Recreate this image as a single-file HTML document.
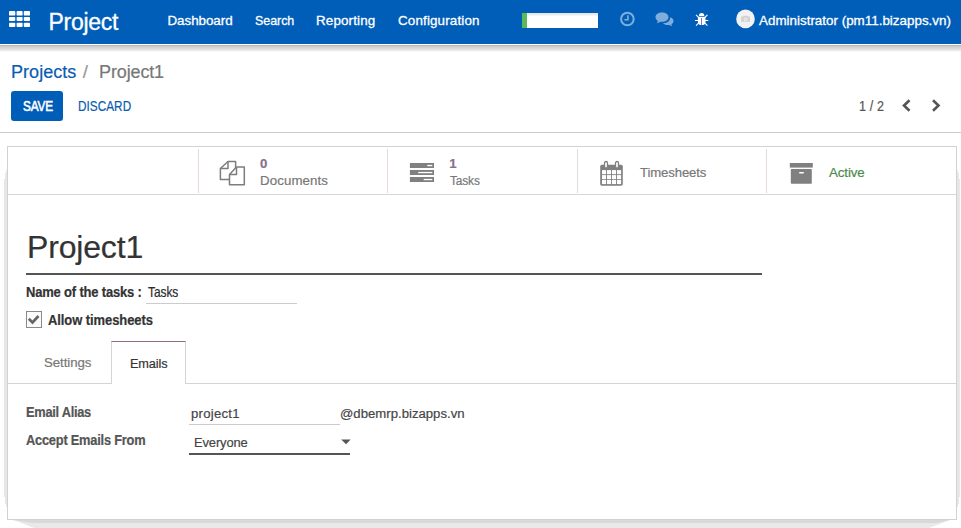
<!DOCTYPE html>
<html><head><meta charset="utf-8">
<style>
*{box-sizing:border-box;margin:0;padding:0}
html,body{width:961px;height:528px;overflow:hidden;background:#fff;font-family:"Liberation Sans",sans-serif;color:#333}
.a,.t{position:absolute;white-space:nowrap}
.t{line-height:normal;-webkit-text-stroke:.2px}
.w{-webkit-text-stroke:.3px #fff}
.w2{-webkit-text-stroke:.55px #fff}
#nav{left:0;top:0;width:961px;height:44px;background:#005eb8}
#navsh{left:0;top:45px;width:961px;height:7px;background:linear-gradient(#b0b0b0,#d0d0d0 25%,#dcdcdc 55%,#f0f0f0 85%,#fff)}
.vs{width:1px;top:149px;height:44px;background:#e4dada}
</style></head><body>
<div class="a" id="nav"></div><div class="a" id="navsh"></div>
<!-- apps grid -->
<svg class="a" style="left:9px;top:10px" width="22" height="18" viewBox="0 0 22 18"><g fill="#fff"><rect x="0" y="1" width="6.3" height="4.6" rx=".9"/><rect x="7.6" y="1" width="6" height="4.6" rx=".9"/><rect x="14.8" y="1" width="6.2" height="4.6" rx=".9"/><rect x="0" y="6.9" width="6.3" height="4.1" rx=".9"/><rect x="7.6" y="6.9" width="6" height="4.1" rx=".9"/><rect x="14.8" y="6.9" width="6.2" height="4.1" rx=".9"/><rect x="0" y="12.7" width="6.3" height="4.3" rx=".9"/><rect x="7.6" y="12.7" width="6" height="4.3" rx=".9"/><rect x="14.8" y="12.7" width="6.2" height="4.3" rx=".9"/></g></svg>
<!-- progress -->
<div class="a" style="left:522px;top:13px;width:76px;height:15px;background:linear-gradient(#e6e6e6,#ececec 2px,#fff 3px);border-left:5px solid #5cb85c"></div>
<!-- clock -->
<svg class="a" style="left:619px;top:11px" width="17" height="17" viewBox="0 0 17 17"><circle cx="8.4" cy="8" r="6.3" fill="none" stroke="#80aedb" stroke-width="2"/><path d="M8.9 4.2v4.6H5.4" fill="none" stroke="#80aedb" stroke-width="1.6"/></svg>
<!-- comments -->
<svg class="a" style="left:655px;top:12px" width="20" height="16" viewBox="0 0 20 16"><g fill="#80aedb"><path d="M7 .6c3.700 0 6.500 2 6.500 4.600s-2.800 4.600-6.500 4.600c-.6 0-1.200-.05-1.700-.15C4.300 10.500 3 11.100 1.600 11.300c.7-.7 1.200-1.400 1.300-2.300C1.400 8.100.5 6.700.5 5.200.5 2.600 3.300.6 7 .6z"/><path d="M15 6.300c0 .3 0 .6-.1.900-.7 2.400-3.500 4-6.900 4.100 1.100 1.200 3 1.900 5 1.800.5 0 .9 0 1.300-.1.900.7 2 1.200 3.200 1.300-.6-.6-1-1.300-1.100-2.100 1.300-.8 2.100-2 2.100-3.300 0-1.500-1.200-2.900-3-3.600-.1.300-.3.700-.5 1z"/></g></svg>
<!-- bug -->
<svg class="a" style="left:694px;top:12px" width="16" height="15" viewBox="0 0 16 15"><g fill="none" stroke="#fff" stroke-width="1.1"><path d="M1 8.500h13.300M2 2.800l3 3M13.400 2.800l-3 3M2 13.700l3-3M13.400 13.700l-3-3"/></g><path d="M4.900 3.900a2.700 3 0 0 1 5.400 0z" fill="#fff"/><path d="M3.900 4.700h7.600v5a3.800 3.400 0 0 1-7.600 0z" fill="#fff"/><rect x="7.100" y="6" width=".9" height="7.100" fill="#8a5cd6"/></svg>
<!-- avatar -->
<svg class="a" style="left:736px;top:9px" width="20" height="20" viewBox="0 0 20 20"><circle cx="9.500" cy="9.900" r="9.300" fill="#f3f2f2"/><path d="M5.100 7.600h1.800l.7-.9h3.800l.7.900h1.900v5.200h-8.900z" fill="#d2d2d2"/><circle cx="9.500" cy="10.200" r="1.800" fill="#f0f0f0"/><circle cx="9.500" cy="10.200" r=".9" fill="#d2d2d2"/></svg>

<!-- control panel -->
<div class="a" style="left:11px;top:91px;width:52px;height:30px;background:#005eb8;border-radius:3px"></div>
<svg class="a" style="left:900px;top:98px" width="44" height="16" viewBox="0 0 44 16"><g fill="none" stroke="#555" stroke-width="2.600"><path d="M9.500 2.200L4 7.500l5.500 5.300"/><path d="M33 2.200l5.500 5.300-5.500 5.300"/></g></svg>
<div class="a" style="left:0;top:132px;width:961px;height:1px;background:#ccc"></div>

<!-- sheet shadow -->
<svg class="a" style="left:0;top:140px" width="961" height="388" viewBox="0 140 961 388" shape-rendering="crispEdges"><g fill="#e7e7e7"><path d="M7 170H6v3H5v6H4v318h1v7h1v3h1z"/><path d="M957 170h1v3h1v6h1v318h-1v7h-1v3h-1z"/></g><path d="M14 520h936l-21 8H34z" fill="#e9e9e9" shape-rendering="auto"/><path d="M12 520h938l-13 3H32z" fill="#d9d9d9" shape-rendering="auto"/></svg>
<!-- sheet -->
<div class="a" style="left:7px;top:146px;width:950px;height:374px;border:1px solid #d2d2d2;background:#fff"></div>
<div class="a" style="left:8px;top:194px;width:948px;height:1px;background:#d6d6d6"></div>
<div class="a vs" style="left:198px"></div><div class="a vs" style="left:387px"></div><div class="a vs" style="left:577px"></div><div class="a vs" style="left:766px"></div>
<!-- files-o -->
<svg class="a" style="left:219px;top:160px" width="27" height="27" viewBox="0 0 27 27"><g fill="none" stroke="#7d7d7d" stroke-width="1.500" stroke-linejoin="round"><path d="M16.600 8V1.500H9L1.400 8.500v11h9.100"/><path d="M9 1.500v7H1.400"/><path d="M17.500 7h7.800v17.700H10.500V14.400z" fill="#fff"/><path d="M17.500 7v7.400h-7"/></g></svg>
<!-- tasks -->
<svg class="a" style="left:409px;top:162px" width="26" height="21" viewBox="0 0 26 21"><g fill="#808080"><rect x=".9" y="1" width="24.100" height="5"/><rect x=".9" y="8" width="24.100" height="5"/><rect x=".9" y="15" width="24.100" height="5"/></g><g fill="#fff"><rect x="18.200" y="2.900" width="5.100" height="1.300"/><rect x="9.200" y="9.900" width="14.100" height="1.300"/><rect x="14.700" y="16.900" width="8.600" height="1.300"/></g></svg>
<!-- calendar -->
<svg class="a" style="left:599px;top:160px" width="25" height="27" viewBox="0 0 25 27"><rect x="1.200" y="4.700" width="22.600" height="21" rx="1.600" fill="#808080"/><g fill="#fff"><rect x="3" y="10.1" width="4.100" height="4.100"/><rect x="8" y="10.1" width="4.100" height="4.100"/><rect x="13" y="10.1" width="4.100" height="4.100"/><rect x="18" y="10.1" width="4.100" height="4.100"/><rect x="3" y="15.1" width="4.100" height="4.100"/><rect x="8" y="15.1" width="4.100" height="4.100"/><rect x="13" y="15.1" width="4.100" height="4.100"/><rect x="18" y="15.1" width="4.100" height="4.100"/><rect x="3" y="20" width="4.100" height="4.100"/><rect x="8" y="20" width="4.100" height="4.100"/><rect x="13" y="20" width="4.100" height="4.100"/><rect x="18" y="20" width="4.100" height="4.100"/></g><g fill="#fff" stroke="#808080" stroke-width="1.300"><rect x="5.500" y="1.500" width="3" height="6.400" rx="1.500"/><rect x="16.500" y="1.500" width="3" height="6.400" rx="1.500"/></g></svg>
<!-- archive -->
<svg class="a" style="left:789px;top:162px" width="25" height="23" viewBox="0 0 25 23"><rect x=".8" y="1" width="23" height="4.600" fill="#808080"/><rect x="1.800" y="7" width="21" height="14.800" rx=".7" fill="#808080"/><rect x="10" y="10" width="5" height="1.500" rx=".7" fill="#fff"/></svg>

<!-- title -->
<div class="a" style="left:26px;top:273px;width:736px;height:2px;background:#555"></div>
<div class="a" style="left:146px;top:303px;width:151px;height:1px;background:#ccc"></div>
<!-- checkbox -->
<div class="a" style="left:26px;top:311px;width:16px;height:17px;border:1px solid #8a8a8a;background:#fafafa"></div>
<svg class="a" style="left:26px;top:311px" width="16" height="17" viewBox="0 0 16 17"><path d="M2.800 7.800l3.700 3.700 6-6.500" fill="none" stroke="#666" stroke-width="2.700"/></svg>
<!-- tabs -->
<div class="a" style="left:8px;top:383px;width:948px;height:1px;background:#d4d4d4"></div>
<div class="a" style="left:111px;top:341px;width:75px;height:43px;background:#fff;border:1px solid #d4d4d4;border-top:1px solid #8d6c87;border-bottom:none"></div>
<!-- fields -->
<div class="a" style="left:189px;top:424px;width:151px;height:1px;background:#ccc"></div>
<div class="a" style="left:189px;top:453px;width:161px;height:2px;background:#555"></div>
<svg class="a" style="left:341px;top:439px" width="10" height="6" viewBox="0 0 10 6"><path d="M.2.500h9.500L5 5.200z" fill="#555"/></svg>
<div class="t w" style="left:48.50px;top:8.7px;font-size:23px;font-weight:400;color:#fff;letter-spacing:-0.267px">Project</div>
<div class="t w" style="left:167.50px;top:12.6px;font-size:13.4px;font-weight:400;color:#fff;letter-spacing:-0.050px">Dashboard</div>
<div class="t w" style="left:255.00px;top:12.6px;font-size:13.4px;font-weight:400;color:#fff;letter-spacing:-0.043px;transform:scaleX(0.93);transform-origin:0 0">Search</div>
<div class="t w" style="left:316.00px;top:12.6px;font-size:13.4px;font-weight:400;color:#fff;letter-spacing:0.150px">Reporting</div>
<div class="t w" style="left:398.00px;top:12.6px;font-size:13.4px;font-weight:400;color:#fff;letter-spacing:0.150px">Configuration</div>
<div class="t w" style="left:759.00px;top:12.6px;font-size:13.4px;font-weight:400;color:#fff;letter-spacing:0.007px">Administrator (pm11.bizapps.vn)</div>
<div class="t" style="left:11.00px;top:60.8px;font-size:18.8px;font-weight:400;color:#0a5cb0;letter-spacing:0.030px;transform:scaleX(0.96);transform-origin:0 0">Projects</div>
<div class="t" style="left:82.70px;top:60.8px;font-size:18.8px;font-weight:400;color:#999;letter-spacing:0.000px">/</div>
<div class="t" style="left:98.50px;top:60.8px;font-size:18.8px;font-weight:400;color:#777;letter-spacing:-0.149px;transform:scaleX(0.96);transform-origin:0 0">Project1</div>
<div class="t w2" style="left:23.00px;top:98.0px;font-size:14px;font-weight:400;color:#fff;letter-spacing:-0.159px;transform:scaleX(0.84);transform-origin:0 0">SAVE</div>
<div class="t" style="left:77.50px;top:98.0px;font-size:14px;font-weight:400;color:#0a5cb0;letter-spacing:0.040px;transform:scaleX(0.84);transform-origin:0 0">DISCARD</div>
<div class="t" style="left:858.50px;top:98.0px;font-size:14px;font-weight:400;color:#555;letter-spacing:0.167px;transform:scaleX(0.9);transform-origin:0 0">1 / 2</div>
<div class="t" style="left:260.00px;top:155.9px;font-size:13.2px;font-weight:700;color:#86708e;letter-spacing:0.000px">0</div>
<div class="t" style="left:260.00px;top:173.0px;font-size:13.7px;font-weight:400;color:#777;letter-spacing:0.103px;transform:scaleX(0.97);transform-origin:0 0">Documents</div>
<div class="t" style="left:449.20px;top:155.9px;font-size:13.2px;font-weight:700;color:#86708e;letter-spacing:0.000px">1</div>
<div class="t" style="left:450.00px;top:173.0px;font-size:13.7px;font-weight:400;color:#777;letter-spacing:-0.172px;transform:scaleX(0.87);transform-origin:0 0">Tasks</div>
<div class="t" style="left:639.50px;top:165.0px;font-size:13.7px;font-weight:400;color:#777;letter-spacing:-0.116px;transform:scaleX(0.96);transform-origin:0 0">Timesheets</div>
<div class="t" style="left:829.00px;top:165.0px;font-size:13.7px;font-weight:400;color:#4a8a4a;letter-spacing:-0.082px;transform:scaleX(0.97);transform-origin:0 0">Active</div>
<div class="t" style="left:27.00px;top:229.2px;font-size:32px;font-weight:400;color:#333;letter-spacing:-0.171px">Project1</div>
<div class="t" style="left:26.00px;top:285.0px;font-size:13.8px;font-weight:700;color:#333;letter-spacing:-0.177px;transform:scaleX(0.94);transform-origin:0 0">Name of the tasks :</div>
<div class="t" style="left:147.50px;top:284.0px;font-size:14.2px;font-weight:400;color:#2b2b2b;letter-spacing:-0.060px;transform:scaleX(0.84);transform-origin:0 0">Tasks</div>
<div class="t" style="left:48.00px;top:312.6px;font-size:13.8px;font-weight:700;color:#333;letter-spacing:-0.071px;transform:scaleX(0.94);transform-origin:0 0">Allow timesheets</div>
<div class="t" style="left:43.50px;top:355.3px;font-size:13.7px;font-weight:400;color:#777;letter-spacing:-0.088px;transform:scaleX(0.97);transform-origin:0 0">Settings</div>
<div class="t" style="left:130.00px;top:355.8px;font-size:13.7px;font-weight:400;color:#333;letter-spacing:-0.129px;transform:scaleX(0.93);transform-origin:0 0">Emails</div>
<div class="t" style="left:26.00px;top:404.8px;font-size:13.8px;font-weight:700;color:#555;letter-spacing:-0.301px;transform:scaleX(0.93);transform-origin:0 0">Email Alias</div>
<div class="t" style="left:190.50px;top:406.0px;font-size:13.4px;font-weight:400;color:#444;letter-spacing:0.262px;transform:scaleX(0.98);transform-origin:0 0">project1</div>
<div class="t" style="left:340.00px;top:406.0px;font-size:13.7px;font-weight:400;color:#444;letter-spacing:0.012px;transform:scaleX(0.96);transform-origin:0 0">@dbemrp.bizapps.vn</div>
<div class="t" style="left:26.00px;top:433.0px;font-size:13.8px;font-weight:700;color:#555;letter-spacing:-0.240px;transform:scaleX(0.93);transform-origin:0 0">Accept Emails From</div>
<div class="t" style="left:194.00px;top:435.0px;font-size:13.6px;font-weight:400;color:#444;letter-spacing:-0.120px;transform:scaleX(0.95);transform-origin:0 0">Everyone</div>
</body></html>
